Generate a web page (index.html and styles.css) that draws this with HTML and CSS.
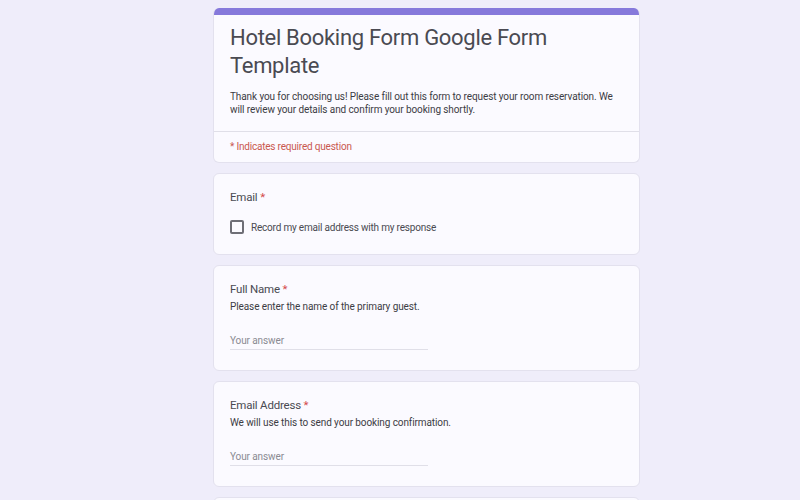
FILE: index.html
```html
<!DOCTYPE html>
<html lang="en">

<head>
    <meta charset="UTF-8">
    <meta name="viewport" content="width=device-width, initial-scale=1.0">
    <title>Hotel Booking Form Google Form Template</title>

    <link rel="stylesheet" href="styles.css">
</head>

<body>
    <div class="form">
        <div class="card header">
            <div class="bar"></div>
            <div class="header-body">
                <h1>Hotel Booking Form Google Form Template</h1>
                <p class="intro">Thank you for choosing us! Please fill out this form to request your room reservation. We will review your details and confirm your booking shortly.</p>
            </div>
            <div class="required-note">* Indicates required question</div>
        </div>

        <div class="card question">
            <div class="label">Email <span class="star">*</span></div>
            <label class="check">
                <span class="box"></span>
                Record my email address with my response
            </label>
        </div>

        <div class="card question">
            <div class="label">Full Name <span class="star">*</span></div>
            <div class="help">Please enter the name of the primary guest.</div>
            <div class="answer">Your answer</div>
        </div>

        <div class="card question">
            <div class="label">Email Address <span class="star">*</span></div>
            <div class="help">We will use this to send your booking confirmation.</div>
            <div class="answer">Your answer</div>
        </div>

        <div class="card question last"></div>
    </div>
</body>

</html>
```

FILE: styles.css
```css
body {
    margin: 0;
    background-color: #efedfa;
    font-family: Roboto, 'Liberation Sans', Arial, sans-serif;
    color: #3c3c44;
    overflow: hidden;
}

.form {
    width: 427px;
    margin-left: 213px;
    padding-top: 8px;
    display: flex;
    flex-direction: column;
    gap: 10px;
}

.card {
    background-color: #fbfaff;
    border: 1px solid #e3e1ee;
    border-radius: 6px;
    box-sizing: border-box;
}

/* header */
.header {
    overflow: hidden;
    border-top: none;
}

.bar {
    height: 7px;
    background-color: #8679db;
}

.header-body {
    padding: 9px 16px 15px 16px;
}

h1 {
    margin: 0;
    font-size: 22px;
    line-height: 28px;
    font-weight: 400;
    letter-spacing: -0.3px;
    color: #4a4a52;
}

.intro {
    margin: 10px 0 0 0;
    font-size: 10px;
    line-height: 13px;
    letter-spacing: -0.1px;
    color: #3c3c44;
}

.required-note {
    border-top: 1px solid #e0dfe8;
    padding: 8px 16px 9px 16px;
    font-size: 10px;
    line-height: 13px;
    letter-spacing: -0.2px;
    color: #c9584f;
}

/* questions */
.question {
    padding: 15px 16px 20px 16px;
}

.label {
    font-size: 11.5px;
    line-height: 16px;
    letter-spacing: -0.2px;
    color: #4a4a52;
}

.star {
    color: #d44a4a;
}

.check {
    display: flex;
    align-items: center;
    gap: 7px;
    margin-top: 15px;
    font-size: 10px;
    letter-spacing: -0.2px;
    color: #4a4a52;
}

.box {
    width: 10px;
    height: 10px;
    border: 2px solid #6e6e76;
    border-radius: 2px;
}

.help {
    margin-top: 3px;
    font-size: 10px;
    line-height: 14px;
    letter-spacing: -0.1px;
    color: #3c3c44;
}

.answer {
    width: 198px;
    margin-top: 20px;
    padding-bottom: 2px;
    border-bottom: 1px solid #e0dfe8;
    font-size: 10px;
    line-height: 13px;
    letter-spacing: -0.1px;
    color: #8a8a92;
}

.last {
    height: 40px;
}
```
